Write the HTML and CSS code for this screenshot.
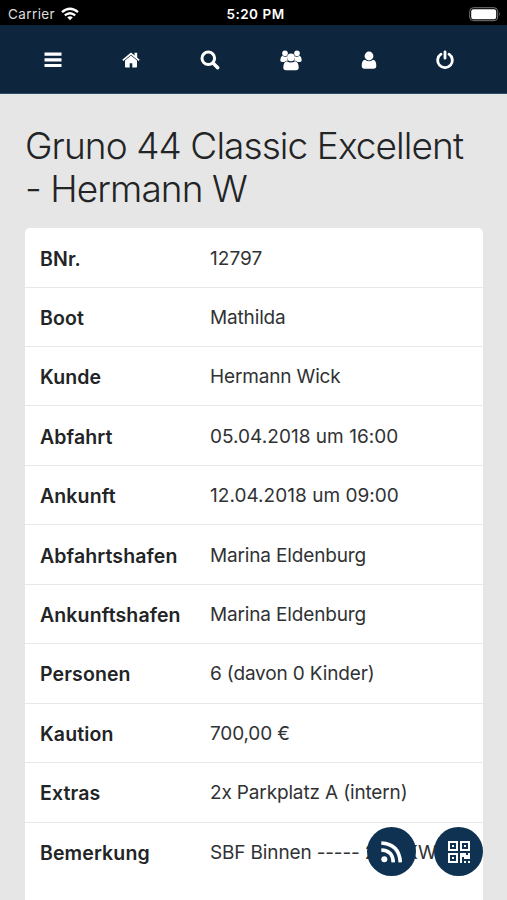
FILE: index.html
```
<!DOCTYPE html>
<html lang="de">
<head>
<meta charset="utf-8">
<meta name="viewport" content="width=device-width, initial-scale=1">
<title>Gruno 44 Classic Excellent</title>
<link rel="stylesheet" href="styles.css">
</head>
<body>
<header class="status">
  <div class="carrier"><span>Carrier</span>
    <svg class="line" width="18" height="14" viewBox="0 0 18 14" stroke-width="2.3"><path d="M1 5.200Q9-1.700 17 5.200M3.800 8.400Q9 4 14.200 8.400"/><path class="solid" d="M6.200 10.300Q9 8 11.800 10.300L9 13.200Z"/></svg>
  </div>
  <span class="time">5:20 PM</span>
  <svg class="battery" width="32" height="15" viewBox="0 0 32 15"><rect class="shell" x=".7" y=".7" width="28" height="13" rx="3.7"/><rect x="2.2" y="2.2" width="25" height="10" rx="2.2"/><path d="M30 5q1.700 2.200 0 4.500z" opacity=".5"/></svg>
</header>
<nav class="nav">
  <svg width="18" height="16" viewBox="0 0 18 16"><path d="M.5.5h17v3.200H.5zM.5 6.200h17v3.200H.5zM.5 11.900h17v3.200H.5z"/></svg>
  <svg width="18" height="16" viewBox="0 0 18 16"><path d="M9 3.400 3 8.400v6.300q0 .8.800.8h3.900v-4.300h2.600v4.300h3.900q.8 0 .8-.8v-6.300z"/><path class="line" d="M.8 8.300 9 1.500l8.200 6.800" stroke-width="1.700"/><path d="M12.500.8h2.700v6.200l-2.700-2z"/></svg>
  <svg class="line" width="20" height="20" viewBox="0 0 20 20"><circle cx="8.300" cy="8.300" r="6.300" stroke-width="3"/><path d="m13 13 4.700 4.700" stroke-width="3.400" stroke-linecap="round"/></svg>
  <svg width="22" height="21" viewBox="0 0 22 21"><circle cx="5" cy="3.300" r="2.800"/><circle cx="17" cy="3.300" r="2.800"/><path d="M2.300 5.500Q4.500 7.500 7 6.200 6.500 9 8 10.500 5.500 10.600 4.500 12H2Q.3 12 .3 10.300.3 7 2.300 5.500zM19.700 5.500Q17.500 7.500 15 6.200 15.500 9 14 10.500 16.500 10.600 17.500 12H20q1.700 0 1.700-1.700 0-3.300-2-4.800z"/><circle cx="11" cy="7.300" r="3.900"/><path d="M6.800 11.200Q11 14 15.200 11.200q3.500 1 3.500 6.300 0 2.700-2.700 2.700H6q-2.700 0-2.700-2.700 0-5.300 3.500-6.300z"/></svg>
  <svg class="user" width="16" height="19" viewBox="0 0 16 19"><circle cx="8" cy="5" r="4.400"/><path d="M4 8.700q4 3.300 8 0 3.300.6 3.300 6 0 3-2.700 3H3.400q-2.700 0-2.700-3 0-5.400 3.300-6z"/></svg>
  <svg class="line power" width="18" height="19" viewBox="0 0 18 19" stroke-width="2.800" stroke-linecap="round"><path d="M5 4.200a7.300 7.300 0 1 0 8 0M9 1.800v6.400"/></svg>
</nav>
<main class="page">
  <h1>Gruno 44 Classic Excellent<br>- Hermann W</h1>
  <dl class="details">
    <div class="row"><dt>BNr.</dt><dd class="digits">12797</dd></div>
    <div class="row"><dt>Boot</dt><dd>Mathilda</dd></div>
    <div class="row"><dt>Kunde</dt><dd>Hermann Wick</dd></div>
    <div class="row"><dt>Abfahrt</dt><dd class="digits">05.04.2018 um 16:00</dd></div>
    <div class="row"><dt>Ankunft</dt><dd class="digits">12.04.2018 um 09:00</dd></div>
    <div class="row"><dt>Abfahrtshafen</dt><dd>Marina Eldenburg</dd></div>
    <div class="row"><dt>Ankunftshafen</dt><dd>Marina Eldenburg</dd></div>
    <div class="row"><dt>Personen</dt><dd>6 (davon 0 Kinder)</dd></div>
    <div class="row"><dt>Kaution</dt><dd>700,00 €</dd></div>
    <div class="row"><dt>Extras</dt><dd>2x Parkplatz A (intern)</dd></div>
    <div class="row"><dt>Bemerkung</dt><dd>SBF Binnen ----- <span class="cars">2x PKW</span></dd></div>
  </dl>
</main>
<div class="actions">
  <a class="fab"><svg class="line" width="24" height="24" viewBox="0 0 24 24" stroke-width="3.600"><circle class="solid" cx="4.300" cy="19.300" r="3"/><path d="M1.300 10q11.500.5 12 12.300M1.300 3q18 1 19 19.300"/></svg></a>
  <a class="fab"><svg width="22" height="22" viewBox="0 0 22 22"><path fill-rule="evenodd" d="M0 0h10v10H0zM2 2v6h6V2zM12 0h10v10H12zM14 2v6h6V2zM0 12h10v10H0zM2 14v6h6v-6zM4 4h2v2H4zM16 4h2v2h-2zM4 16h2v2H4zM12 12h6v2h2v-2h2v6h-6v-2h-2v6h-2zM16 20h2v2h-2zM20 20h2v2h-2z"/></svg></a>
</div>
</body>
</html>
```
FILE: styles.css
```
* { box-sizing: border-box; }
body {
  margin: 0;
  height: 900px;
  overflow: hidden;
  background: #e6e6e6;
  color: #222426;
  font-family: Inter, "Liberation Sans", sans-serif;
}
svg { display: block; fill: #fff; flex: none; }
.line { fill: none; stroke: #fff; }
.solid { fill: #fff; stroke: none; }
.shell { fill: none; stroke: #777; }
.status {
  display: grid;
  grid-template-columns: 1fr auto 1fr;
  align-items: center;
  height: 25px;
  padding: 3px 6px 0 8px;
  background: #000;
  color: #fff;
  font-size: 13.5px;
  line-height: 22px;
}
.carrier { display: flex; align-items: center; gap: 6px; color: #ddd; letter-spacing: .4px; }
.time { font-weight: 600; font-size: 13.5px; letter-spacing: .5px; padding-left: 2px; }
.battery { justify-self: end; }
.nav {
  display: grid;
  grid-template-columns: 78px 78px 80px 82px 75px 77px;
  align-items: center;
  justify-items: center;
  height: 69px;
  padding: 2px 0 0 14px;
  background: #0d263e;
  border-bottom: 1px solid #314b5e;
}
.user, .power { margin-right: 2px; }
.power { margin-bottom: 2px; }
.page { padding: 30px 25px 0; }
h1 {
  margin: 0 0 18px;
  font-size: 37px;
  line-height: 43px;
  font-weight: 300;
  letter-spacing: -.92px;
  white-space: nowrap;
}
.details {
  margin: 0;
  width: 457.500px;
  height: 700px;
  background: #fff;
  border-radius: 5px 5px 0 0;
}
.row {
  display: grid;
  grid-template-columns: 170px 1fr;
  align-items: center;
  height: 59.450px;
  padding: 2px 0 0 15px;
  border-bottom: 1px solid #e6e8e9;
  font-size: 19px;
  line-height: 28px;
  white-space: nowrap;
}
.row:first-child { height: 59.600px; padding-top: 3px; }
.row:last-child { border-bottom: 0; }
dt { font-size: 19.500px; font-weight: 600; letter-spacing: .12px; }
dd { margin: 0; color: #303234; letter-spacing: -.15px; }
.digits { letter-spacing: .03px; }
.cars { letter-spacing: .2px; }
.actions {
  position: absolute;
  left: 367px;
  top: 827px;
  display: flex;
  gap: 18px;
}
.fab {
  display: grid;
  place-items: center;
  width: 49px;
  height: 49px;
  border-radius: 50%;
  background: #103252;
}
```
